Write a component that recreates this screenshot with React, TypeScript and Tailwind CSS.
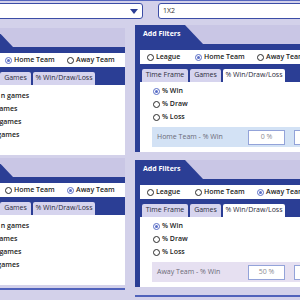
import React from 'react';

type Team = 'home' | 'away';
type View = 'time' | 'win';

function Radio({ on }: { on?: boolean }) {
  if (on) {
    return (
      <span className="flex h-[7px] w-[7px] flex-none items-center justify-center rounded-full border border-[#5a6ec6]">
        <span className="h-[3px] w-[3px] rounded-full bg-[#5a6ec6]" />
      </span>
    );
  }
  return <span className="h-[7px] w-[7px] flex-none rounded-full border border-[#2a2a2a]" />;
}

function Tab({ label, active, w }: { label: string; active?: boolean; w: string }) {
  return (
    <div
      className={
        'flex h-[13px] flex-none items-center justify-center rounded-t-[2px] text-[7px] text-[#2b2b3a] ' +
        w +
        (active ? ' bg-white' : ' bg-[#d6d4ee]')
      }
    >
      {label}
    </div>
  );
}

function Panel({ team, view }: { team: Team; view: View }) {
  const isHome = team === 'home';
  return (
    <div className="flex flex-col">
      {/* header */}
      <div className="h-[19px] bg-[#c9c6e5]">
        <div className="flex h-full w-[68px] items-center bg-[#2b3e95] pl-[8px] text-[7px] font-bold text-white [clip-path:polygon(0_0,50px_0,68px_100%,0_100%)]">
          Add Filters
        </div>
      </div>

      <div className="bg-[#2b3e95] pl-[5px] pt-[6px]">
        {/* team radios */}
        <div className="flex h-[14px] items-center bg-white pl-[7px] text-[7px] font-semibold text-[#222]">
          <div className="flex w-[48px] flex-none items-center gap-[2px]">
            <Radio />
            <span>League</span>
          </div>
          <div className="flex w-[62px] flex-none items-center gap-[2px]">
            <Radio on={isHome} />
            <span>Home Team</span>
          </div>
          <div className="flex flex-none items-center gap-[2px]">
            <Radio on={!isHome} />
            <span>Away Team</span>
          </div>
        </div>

        {/* tabs */}
        <div className="flex h-[18px] items-end gap-[2px] pl-[2px]">
          <Tab label="Time Frame" w="w-[46px]" active={view === 'time'} />
          <Tab label="Games" w="w-[31px]" />
          <Tab label="% Win/Draw/Loss" w="w-[62px]" active={view === 'win'} />
        </div>

        {/* body */}
        {view === 'time' ? (
          <div className="h-[70px] bg-white pl-[35px] pt-[5px] text-[7px] font-semibold text-[#222]">
            {['Last n games', 'All games', 'Top games', 'Big games'].map((t) => (
              <div key={t} className="flex h-[13px] items-center">
                {t}
              </div>
            ))}
          </div>
        ) : (
          <div className="h-[70px] bg-white pt-[3px]">
            <div className="pl-[13px] text-[7px] font-semibold text-[#222]">
              {['% Win', '% Draw', '% Loss'].map((t, i) => (
                <div key={t} className="flex h-[13px] items-center gap-[2px]">
                  <Radio on={i === 0} />
                  <span>{t}</span>
                </div>
              ))}
            </div>
            <div
              className={
                'ml-[12px] mt-[3px] flex h-[20px] items-center ' +
                (isHome ? 'bg-[#d3e2f5]' : 'bg-[#e6e0f1]')
              }
            >
              <div className="w-[96px] flex-none pl-[5px] text-[7px] text-[#6b6b78]">
                {isHome ? 'Home Team' : 'Away Team'} - % Win
              </div>
              <div className="flex h-[15px] w-[37px] flex-none items-center justify-center border border-[#93a3d9] bg-white text-[7px] text-[#8a8a92]">
                {isHome ? '0 %' : '50 %'}
              </div>
              <div className="ml-[9px] flex h-[15px] w-[37px] flex-none items-center justify-center border border-[#93a3d9] bg-white text-[7px] text-[#8a8a92]">
                100 %
              </div>
            </div>
          </div>
        )}
      </div>
    </div>
  );
}

export default function App() {
  return (
    <div className="h-[300px] w-[300px] overflow-hidden border-t border-[#5566bf] bg-[#d3d1ea] font-['Open_Sans',sans-serif]">
      <div className="ml-[-55px] w-[440px]">
        {/* top selects */}
        <div className="mt-[2px] flex h-[16px]">
          <div className="flex h-[16px] w-[198px] flex-none items-center justify-between rounded-[3px] border border-[#3b4da6] bg-white pl-[26px] pr-[4px] text-[7px] text-[#333]">
            <span>Market:</span>
            <span className="h-0 w-0 border-x-[4px] border-t-[5px] border-x-transparent border-t-[#2b3e95]" />
          </div>
          <div className="ml-[15px] flex h-[16px] flex-1 items-center rounded-[3px] border border-[#3b4da6] bg-white pl-[4px] text-[7px] text-[#333]">
            1X2
          </div>
        </div>

        <div className="mt-[6px] flex gap-[10px]">
          {/* left column */}
          <div className="flex w-[180px] flex-none flex-col gap-[3px] pt-[3px]">
            <Panel team="home" view="time" />
            <Panel team="away" view="time" />
            <div className="h-[2px] bg-[#5062bb]" />
          </div>
          {/* right column */}
          <div className="flex w-[200px] flex-none flex-col gap-[8px]">
            <Panel team="home" view="win" />
            <Panel team="away" view="win" />
            <div className="h-[2px] bg-[#5062bb]" />
          </div>
        </div>
      </div>
    </div>
  );
}
